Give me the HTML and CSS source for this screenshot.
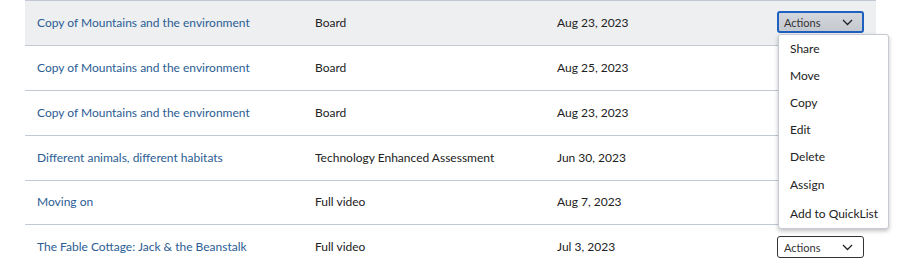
FILE: index.html
```html
<!DOCTYPE html>
<html>
<head>
<meta charset="utf-8">
<link rel="stylesheet" href="styles.css">
</head>
<body>
<div class="table">
  <div class="row hover">
    <a class="title">Copy of Mountains and the environment</a>
    <span class="type">Board</span>
    <span class="date">Aug 23, 2023</span>
    <div class="actions-cell">
      <button class="actions focused"><span>Actions</span><svg width="11" height="7" viewBox="0 0 11 7"><path d="M1 1l4.5 4.5L10 1" fill="none" stroke="#222" stroke-width="1.3"/></svg></button>
      <ul class="menu">
        <li>Share</li>
        <li>Move</li>
        <li>Copy</li>
        <li>Edit</li>
        <li>Delete</li>
        <li>Assign</li>
        <li>Add to QuickList</li>
      </ul>
    </div>
  </div>
  <div class="row">
    <a class="title">Copy of Mountains and the environment</a>
    <span class="type">Board</span>
    <span class="date">Aug 25, 2023</span>
    <div class="actions-cell"></div>
  </div>
  <div class="row">
    <a class="title">Copy of Mountains and the environment</a>
    <span class="type">Board</span>
    <span class="date">Aug 23, 2023</span>
    <div class="actions-cell"></div>
  </div>
  <div class="row">
    <a class="title">Different animals, different habitats</a>
    <span class="type">Technology Enhanced Assessment</span>
    <span class="date">Jun 30, 2023</span>
    <div class="actions-cell"></div>
  </div>
  <div class="row">
    <a class="title">Moving on</a>
    <span class="type">Full video</span>
    <span class="date">Aug 7, 2023</span>
    <div class="actions-cell"></div>
  </div>
  <div class="row last">
    <a class="title">The Fable Cottage: Jack &amp; the Beanstalk</a>
    <span class="type">Full video</span>
    <span class="date">Jul 3, 2023</span>
    <div class="actions-cell">
      <button class="actions"><span>Actions</span><svg width="11" height="7" viewBox="0 0 11 7"><path d="M1 1l4.5 4.5L10 1" fill="none" stroke="#222" stroke-width="1.3"/></svg></button>
    </div>
  </div>
</div>
</body>
</html>
```

FILE: styles.css
```css
* { box-sizing: border-box; }
body {
  margin: 0;
  background: #fff;
  font-family: Lato, "Liberation Sans", sans-serif;
  font-size: 12px;
  color: #222;
  overflow: hidden;
}
.table {
  margin-left: 25px;
  width: 851px;
}
.row {
  display: grid;
  grid-template-columns: 290px 242px 220px 99px;
  align-items: center;
  height: 45px;
  padding-bottom: 2px;
  border-top: 1px solid #c2c8d4;
}
.row:nth-child(5) { height: 44px; }
.row.hover { background: #eeeff1; }
.title {
  padding-left: 12px;
  color: #2b5d94;
  text-decoration: none;
}
.type, .date { color: #222; }
.actions-cell {
  position: relative;
  height: 100%;
  display: flex;
  align-items: center;
}
.actions {
  width: 87px;
  height: 22px;
  display: flex;
  align-items: center;
  justify-content: space-between;
  padding: 0 10px 0 6px;
  border: 1px solid #333;
  border-radius: 3px;
  background: #fff;
  font-family: Lato, "Liberation Sans", sans-serif;
  font-size: 11px;
  color: #333;
  margin-top: 2px;
}
.actions.focused {
  border: 2px solid #1f5fbf;
  padding: 0 9px 0 5px;
  background: linear-gradient(#d4d7dd, #c4c8cf);
  margin-top: 0;
}
.menu {
  position: absolute;
  top: 33px;
  left: 1px;
  width: 111px;
  margin: 0;
  padding: 0;
  list-style: none;
  background: #fff;
  border: 1px solid #c6cad3;
  border-radius: 3px;
  box-shadow: 0 2px 4px rgba(0,0,0,0.25);
  z-index: 2;
}
.menu li {
  height: 27px;
  line-height: 27px;
  padding-left: 11px;
  font-size: 12px;
  color: #222;
  white-space: nowrap;
}
.menu li:nth-child(n+6) {
  height: 29px;
  line-height: 29px;
}
```
